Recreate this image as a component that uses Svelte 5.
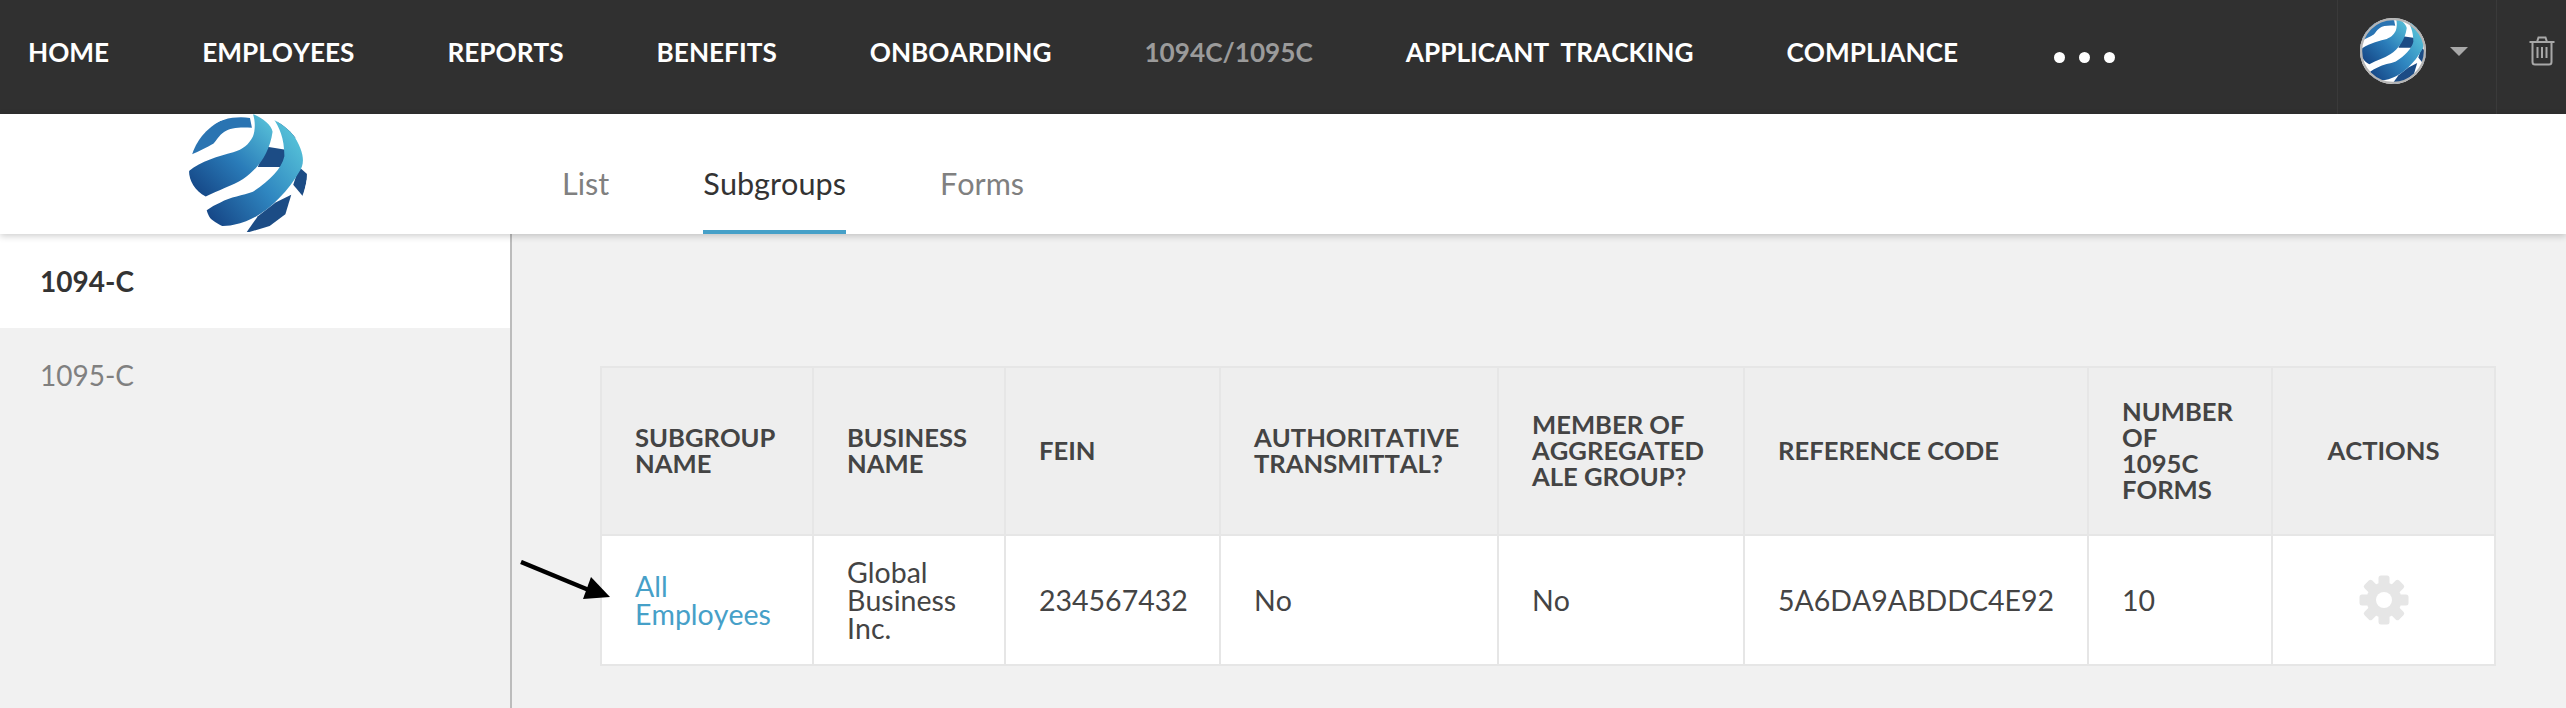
<script lang="ts">
  const navItems = ["HOME", "EMPLOYEES", "REPORTS", "BENEFITS", "ONBOARDING", "1094C/1095C", "APPLICANT TRACKING", "COMPLIANCE"];
  const tabs = ["List", "Subgroups", "Forms"];
  const gearTeeth = [0, 45, 90, 135, 180, 225, 270, 315];
</script>

<svg class="defs" width="0" height="0" aria-hidden="true">
  <defs>
    <linearGradient id="bandA" x1="0" y1="1" x2="1" y2="0">
      <stop offset="0" stop-color="#123f7f" />
      <stop offset="0.5" stop-color="#2a7cb9" />
      <stop offset="1" stop-color="#5cc8dc" />
    </linearGradient>
    <linearGradient id="bandB" x1="0" y1="1" x2="1" y2="0.1">
      <stop offset="0" stop-color="#133f80" />
      <stop offset="0.5" stop-color="#2f86c0" />
      <stop offset="1" stop-color="#5ccbdc" />
    </linearGradient>
    <clipPath id="ball"><circle cx="60" cy="60" r="60" /></clipPath>
    <symbol id="globe" viewBox="0 0 120 120">
      <g clip-path="url(#ball)">
        <rect width="120" height="120" fill="#fff" />
        <path d="M84 2 L106 14 L112 26 L102 22 L94 12 Z" fill="#1d4f87" />
        <path d="M78 33 L103 37 L93 54 L70 54 Z" fill="#1c4c85" />
        <path d="M112 54 L121 62 L116 84 L106 72 Z" fill="#1c4c85" />
        <path d="M88 90 L104 82 L98 102 L82 114 L58 121 L70 104 Z" fill="#1c4c85" />
        <path d="M3 41 C5 28 14 12 35 6 C45 3 54 3 62 4 L64 14 C52 13 42 14 36 18 C30 22 28 27 25 30 C18 34 10 38 3 41 Z" fill="#2a74b2" />
        <path d="M0 58 C0 68 6 78 17 84 C30 77 44 73 55 66 C70 56 82 40 85 18 C84 11 74 3 65 0 C68 8 67 18 65 23 C61 31 55 36 45 39 C30 43 12 48 0 58 Z" fill="url(#bandA)" />
        <path d="M18 98 C20 106 25 111 30 114 C42 114 50 112 58 109 C78 102 100 80 112 59 C118 50 118 40 105 19 C98 11 92 6 85 3 C92 14 97 24 97 43 C94 56 82 68 65 79 C55 83 42 84 32 90 C27 92 22 95 18 98 Z" fill="url(#bandB)" />
      </g>
    </symbol>
  </defs>
</svg>

<div class="page">
  <header class="topbar">
    <nav class="main-nav">
      {#each navItems as item}
        <span class="nav-item" class:dim={item === "1094C/1095C"}>{item}</span>
      {/each}
      <span class="more"><i></i><i></i><i></i></span>
    </nav>
    <div class="account">
      <svg class="avatar" viewBox="0 0 120 120"><use href="#globe" /><circle cx="60" cy="60" r="58" fill="none" stroke="#b5b5b5" stroke-width="4" /></svg>
      <span class="caret"></span>
    </div>
    <div class="trash">
      <svg width="26" height="30" viewBox="0 0 26 30" fill="none" stroke="#a8a8a8" stroke-width="2">
        <path d="M0.5 6 H25.5" />
        <path d="M8 6 L9.5 1.5 H16.5 L18 6" />
        <path d="M3.5 6 V26 Q3.5 28.5 6 28.5 H20 Q22.5 28.5 22.5 26 V6" />
        <path d="M8.5 11 V22 M13 11 V22 M17.5 11 V22" />
      </svg>
    </div>
  </header>

  <div class="subbar">
    <div class="brand"><svg class="logo"><use href="#globe" /></svg></div>
    <div class="tabs">
      {#each tabs as tab}
        <span class="tab" class:active={tab === "Subgroups"}>{tab}</span>
      {/each}
    </div>
  </div>

  <div class="content">
    <aside class="sidebar">
      <div class="side-item active">1094-C</div>
      <div class="side-item">1095-C</div>
    </aside>
    <main class="main">
      <div class="table-wrap">
        <table>
          <thead>
            <tr>
              <th class="c1">SUBGROUP NAME</th>
              <th class="c2">BUSINESS NAME</th>
              <th class="c3">FEIN</th>
              <th class="c4">AUTHORITATIVE TRANSMITTAL?</th>
              <th class="c5">MEMBER OF AGGREGATED ALE GROUP?</th>
              <th class="c6">REFERENCE CODE</th>
              <th class="c7">NUMBER OF 1095C FORMS</th>
              <th class="c8">ACTIONS</th>
            </tr>
          </thead>
          <tbody>
            <tr>
              <td><span class="link">All Employees</span></td>
              <td>Global Business Inc.</td>
              <td>234567432</td>
              <td>No</td>
              <td>No</td>
              <td>5A6DA9ABDDC4E92</td>
              <td>10</td>
              <td class="actions">
                <svg class="gear" width="50" height="50" viewBox="0 0 50 50">
                  {#each gearTeeth as a}
                    <rect x="19.5" y="0.5" width="11" height="12" rx="2.5" fill="#e6e6e6" transform="rotate({a} 25 25)" />
                  {/each}
                  <circle cx="25" cy="25" r="17.5" fill="#e6e6e6" />
                  <circle cx="25" cy="25" r="8" fill="#fff" />
                </svg>
              </td>
            </tr>
          </tbody>
        </table>
        <svg class="arrow" width="100" height="50" viewBox="0 0 100 50">
          <path d="M1 2 L76 33" stroke="#000" stroke-width="4.5" />
          <path d="M71 17 L90 37 L63 39 Z" fill="#000" />
        </svg>
      </div>
    </main>
  </div>
</div>

<style>
  :global(body) {
    margin: 0;
    background: #f1f1f1;
  }

  .defs {
    position: absolute;
  }

  .page {
    height: 708px;
    overflow: hidden;
    font-family: Lato, "Open Sans", sans-serif;
    font-kerning: none;
    color: #444;
    display: flex;
    flex-direction: column;
  }

  .topbar {
    height: 114px;
    background: #303030;
    display: flex;
    align-items: stretch;
    flex-shrink: 0;
  }

  .main-nav {
    flex: 1;
    display: flex;
    align-items: center;
    gap: 93px;
    padding: 0 0 10px 28px;
  }

  .nav-item {
    color: #fff;
    font-size: 26.2px;
    font-weight: 700;
    white-space: nowrap;
    word-spacing: 5px;
  }

  .nav-item.dim {
    color: #9b9b9b;
  }

  .more {
    display: flex;
    gap: 14px;
    margin-top: 10px;
    margin-left: 3px;
  }

  .more i {
    width: 11px;
    height: 11px;
    border-radius: 50%;
    background: #fff;
  }

  .account {
    width: 160px;
    box-sizing: border-box;
    border-left: 1px solid #3a3a3a;
    border-right: 1px solid #3a3a3a;
    display: flex;
    align-items: center;
    padding: 0 0 12px 22px;
    gap: 24px;
  }

  .avatar {
    width: 66px;
    height: 66px;
  }

  .caret {
    width: 0;
    height: 0;
    border-left: 9px solid transparent;
    border-right: 9px solid transparent;
    border-top: 9px solid #a8a8a8;
  }

  .trash {
    width: 69px;
    display: flex;
    align-items: center;
    justify-content: center;
    padding: 0 0 12px 20px;
    box-sizing: border-box;
  }

  .subbar {
    height: 120px;
    background: #fff;
    box-shadow: 0 2px 7px rgba(0, 0, 0, 0.2);
    display: flex;
    flex-shrink: 0;
    position: relative;
  }

  .brand {
    width: 562px;
    padding-left: 188px;
    box-sizing: border-box;
  }

  .logo {
    display: block;
    width: 120px;
    height: 118px;
  }

  .tabs {
    display: flex;
    gap: 94px;
  }

  .tab {
    font-size: 30.6px;
    color: #808080;
    height: 120px;
    box-sizing: border-box;
    padding-top: 52px;
    line-height: 36px;
  }

  .tab.active {
    color: #333;
    border-bottom: 4px solid #46a0c8;
  }

  .content {
    flex: 1;
    display: flex;
  }

  .sidebar {
    width: 510px;
    box-sizing: content-box;
    border-right: 2px solid #bcbcbc;
    flex-shrink: 0;
  }

  .side-item {
    height: 94px;
    box-sizing: border-box;
    padding: 0 0 0 40px;
    display: flex;
    align-items: center;
    font-size: 28px;
    color: #808080;
  }

  .side-item.active {
    background: #fff;
    color: #333;
    font-weight: 700;
  }

  .main {
    padding: 132px 0 0 88px;
  }

  .table-wrap {
    position: relative;
  }

  table {
    width: 1896px;
    table-layout: fixed;
    border-collapse: collapse;
    border: 2px solid #e6e6e6;
  }

  th {
    background: #eee;
    height: 168px;
    padding: 0 20px 2px 33px;
    text-align: left;
    font-size: 25.6px;
    line-height: 26px;
    font-weight: 700;
    color: #444;
    border: 2px solid #e6e6e6;
    box-sizing: border-box;
  }

  td {
    background: #fff;
    height: 130px;
    box-sizing: border-box;
    padding: 0 20px 0 33px;
    font-size: 28.5px;
    line-height: 28px;
    font-weight: 400;
    border: 2px solid #e6e6e6;
  }

  .c1 { width: 212px; }
  .c2 { width: 192px; }
  .c3 { width: 215px; }
  .c4 { width: 278px; }
  .c5 { width: 246px; }
  .c6 { width: 344px; }
  th.c7 { width: 184px; padding-right: 40px; }
  th.c8 { text-align: center; padding: 0 0 2px; }

  .link {
    color: #46a0c8;
  }

  td.actions {
    text-align: center;
    padding: 0;
  }

  .gear {
    display: block;
    margin: 0 auto;
  }

  .arrow {
    position: absolute;
    left: -80px;
    top: 194px;
  }
</style>
